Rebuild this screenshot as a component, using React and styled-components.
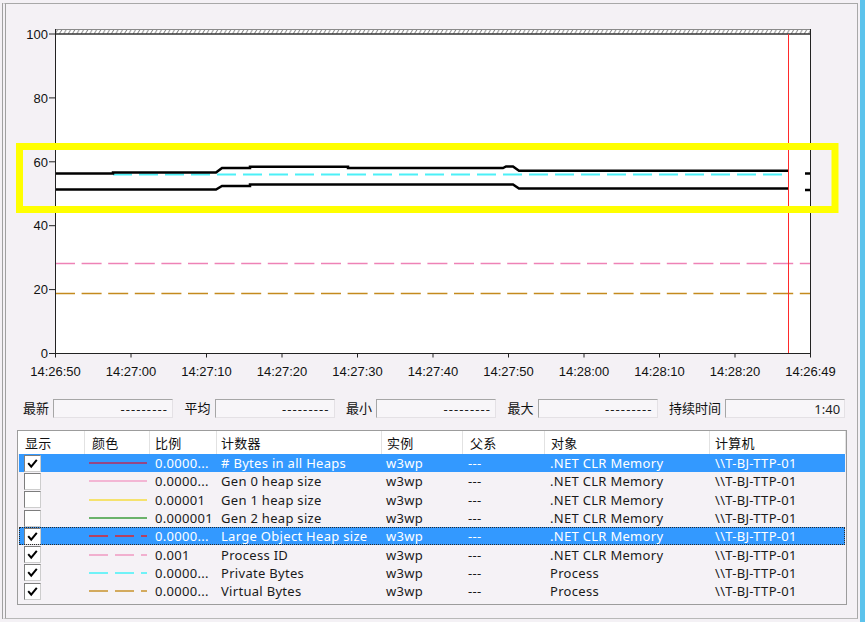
import styled, { createGlobalStyle } from "styled-components";

const GlobalStyle = createGlobalStyle`
  html, body {
    margin: 0;
    padding: 0;
  }
  body {
    background: #f4f1f5;
    font-family: "Noto Sans", "Noto Sans CJK SC", sans-serif;
  }
`;

const COLS = "67px 65px 67px 165px 81px 82px 165px 1fr";

const Screen = styled.div`
  width: 865px;
  height: 622px;
  display: flex;
  background: #f4f1f5;
  overflow: hidden;
`;

const Frame = styled.div`
  flex: 1;
  margin: 3px 2px 3px 2px;
  border-top: 1px solid #a8a8a8;
  border-right: 1px solid #a8a8a8;
  border-bottom: 1px solid #b8b8b8;
  border-left: 4px double #a0a0a0;
  display: flex;
  flex-direction: column;
`;

const SideStrip = styled.div`
  width: 5px;
  background: #5cc3ec;
`;

const ChartSvg = styled.svg`
  display: block;
  width: 851px;
  height: 380px;
  font-family: "Liberation Sans", Arial, sans-serif;
  font-size: 13px;
`;

const StatsRow = styled.div`
  display: flex;
  align-items: center;
  gap: 11.5px;
  height: 19px;
  margin-top: 15px;
  padding-left: 17px;
`;

const StatGroup = styled.div`
  display: flex;
  align-items: center;
  gap: 4px;
`;

const StatLabel = styled.span`
  font-size: 13px;
  line-height: 19px;
  color: #111;
  white-space: nowrap;
`;

const StatBox = styled.div`
  width: 120px;
  height: 19px;
  box-sizing: border-box;
  border: 1px solid;
  border-color: #a6a6a6 #e4e1e5 #e4e1e5 #a6a6a6;
  background: #f8f6f9;
  display: flex;
  align-items: center;
  justify-content: flex-end;
  padding-right: 4px;
  font-size: 13px;
  color: #1e1e1e;
  letter-spacing: ${(p) => (p.$dashes ? "1.1px" : "0")};
`;

const Table = styled.div`
  margin: 12px 10px 0 11px;
  height: 175px;
  box-sizing: border-box;
  border: 1px solid #9c9c9c;
  background: #f5f2f6;
  font-size: 13px;
  letter-spacing: 0.3px;
  color: #1a1a1a;
`;

const HeaderRow = styled.div`
  display: grid;
  grid-template-columns: ${COLS};
  height: 23px;
  background: #ffffff;
  color: #111;
`;

const HeaderCell = styled.div`
  display: flex;
  align-items: center;
  padding-left: ${(p) => p.$pad}px;
  border-right: 1px solid #e2e2e2;
  white-space: nowrap;
  overflow: hidden;
`;

const Row = styled.div`
  display: grid;
  grid-template-columns: ${COLS};
  height: 18.3px;
  margin: 0 1px;
  align-items: center;
  background: ${(p) => (p.$selected ? "#3399ff" : "transparent")};
  color: ${(p) => (p.$selected ? "#ffffff" : "#1a1a1a")};
  outline: ${(p) => (p.$focused ? "1px dotted #2a2a2a" : "none")};
  outline-offset: -1px;
`;

const Cell = styled.div`
  padding-left: ${(p) => p.$pad}px;
  white-space: nowrap;
  overflow: hidden;
  display: flex;
  align-items: center;
  line-height: 18px;
`;

const CheckBox = styled.span`
  display: inline-flex;
  width: 17px;
  height: 17px;
  box-sizing: border-box;
  border: 1px solid;
  border-color: #7d7d7d #cdcdcd #cdcdcd #7d7d7d;
  background: #ffffff;
  align-items: center;
  justify-content: center;
`;

const rows = [
  { checked: true, color: "#b82c5c", dashed: false, scale: "0.0000...", counter: "# Bytes in all Heaps", object: ".NET CLR Memory", selected: true },
  { checked: false, color: "#f2a2c8", dashed: false, scale: "0.0000...", counter: "Gen 0 heap size", object: ".NET CLR Memory" },
  { checked: false, color: "#f4dc40", dashed: false, scale: "0.00001", counter: "Gen 1 heap size", object: ".NET CLR Memory" },
  { checked: false, color: "#3c9c3c", dashed: false, scale: "0.000001", counter: "Gen 2 heap size", object: ".NET CLR Memory" },
  { checked: true, color: "#e0242e", dashed: true, scale: "0.0000...", counter: "Large Object Heap size", object: ".NET CLR Memory", selected: true, focused: true },
  { checked: true, color: "#f09ac2", dashed: true, scale: "0.001", counter: "Process ID", object: ".NET CLR Memory" },
  { checked: true, color: "#44f2f8", dashed: true, scale: "0.0000...", counter: "Private Bytes", object: "Process" },
  { checked: true, color: "#c8922c", dashed: true, scale: "0.0000...", counter: "Virtual Bytes", object: "Process" },
];

const headers = [
  { label: "显示", pad: 7 },
  { label: "颜色", pad: 7 },
  { label: "比例", pad: 5 },
  { label: "计数器", pad: 4 },
  { label: "实例", pad: 5 },
  { label: "父系", pad: 7 },
  { label: "对象", pad: 6 },
  { label: "计算机", pad: 5 },
];

const stats = [
  { label: "最新", value: "---------" },
  { label: "平均", value: "---------" },
  { label: "最小", value: "---------" },
  { label: "最大", value: "---------" },
  { label: "持续时间", value: "1:40" },
];

const xLabels = [
  "14:26:50", "14:27:00", "14:27:10", "14:27:20", "14:27:30", "14:27:40",
  "14:27:50", "14:28:00", "14:28:10", "14:28:20", "14:26:49",
];

const X0 = 55.5;
const X1 = 810.5;
const Y0 = 353.5;
const yOf = (v) => Y0 - (v * 319.5) / 100;

const Chart = () => (
  <ChartSvg viewBox="6 4 851 380">
    <defs>
      <pattern id="hatch" x="55" y="29" width="4.33" height="5" patternUnits="userSpaceOnUse">
        <path d="M0 5 L3 0" stroke="#7a7a7a" strokeWidth="0.9" />
      </pattern>
    </defs>
    <rect x={X0} y="29" width={X1 - X0} height={Y0 - 29} fill="#ffffff" />
    <rect x={X0} y="29" width={X1 - X0} height="5" fill="url(#hatch)" />
    <path d={`M${X0} 29.5 H${X1}`} stroke="#8a8a8a" strokeWidth="1" />
    <path d={`M${X0} 34 H${X1}`} stroke="#333" strokeWidth="1.4" />

    {[0, 20, 40, 60, 80, 100].map((v) => (
      <g key={v}>
        <path d={`M49 ${yOf(v)} H${X0}`} stroke="#222" strokeWidth="1" />
        <text x="48" y={yOf(v) + 4.7} textAnchor="end" fill="#111">{v}</text>
      </g>
    ))}

    {xLabels.map((t, k) => {
      const x = X0 + k * 75.5;
      return (
        <g key={k}>
          <path d={`M${x} ${Y0} V357.5`} stroke="#222" strokeWidth="1" />
          <text x={x} y="375.5" textAnchor="middle" fill="#111">{t}</text>
        </g>
      );
    })}

    <path d={`M55 263.5 H${X1}`} stroke="#ee82b6" strokeWidth="1.5" strokeDasharray="20 6.6" fill="none" />
    <path d={`M55 293.5 H${X1}`} stroke="#c48a1e" strokeWidth="1.5" strokeDasharray="20 6.6" fill="none" />
    <path d="M113 174.5 H788" stroke="#4cf0f7" strokeWidth="2" strokeDasharray="19 7" fill="none" />

    <path
      d="M55 173.5 H113 V172.5 H216 L222 168 H250 V166.7 H348 V168 H503 L506 166.5 H513 L519 170.7 H788"
      stroke="#000" strokeWidth="2.5" fill="none"
    />
    <path
      d="M55 189.5 H216 L222 186 H250 V184.5 H513 L519 188.5 H788"
      stroke="#000" strokeWidth="2.5" fill="none"
    />
    <path d="M805 173.5 H811 M805 190 H811" stroke="#000" strokeWidth="2.5" fill="none" />

    <path d="M788.5 34 V353" stroke="#ff2a2a" strokeWidth="1" />

    <path d={`M${X0} 29 V354`} stroke="#222" strokeWidth="1" />
    <path d={`M${X1} 29 V354`} stroke="#222" strokeWidth="1" />
    <path d={`M55 ${Y0} H811`} stroke="#222" strokeWidth="1" />

    <rect x="19.5" y="146.5" width="815.5" height="63" fill="none" stroke="#ffff00" strokeWidth="7" />
  </ChartSvg>
);

const Check = () => (
  <svg width="15" height="15" viewBox="0 0 15 15">
    <path d="M3.2 7.2 L6.2 10.6 L11.8 3.8" stroke="#000" strokeWidth="2" fill="none" />
  </svg>
);

const ColorSample = ({ color, dashed }) => (
  <svg width="58" height="4" viewBox="0 0 58 4">
    <path d="M0 2 H58" stroke={color} strokeWidth="1.5" strokeDasharray={dashed ? "19 7" : "none"} />
  </svg>
);

export default function App() {
  return (
    <Screen>
      <GlobalStyle />
      <Frame>
        <Chart />
        <StatsRow>
          {stats.map((s) => (
            <StatGroup key={s.label}>
              <StatLabel>{s.label}</StatLabel>
              <StatBox $dashes={s.value.startsWith("-")}>{s.value}</StatBox>
            </StatGroup>
          ))}
        </StatsRow>
        <Table>
          <HeaderRow>
            {headers.map((h) => (
              <HeaderCell key={h.label} $pad={h.pad}>{h.label}</HeaderCell>
            ))}
          </HeaderRow>
          {rows.map((r) => (
            <Row key={r.counter} $selected={r.selected} $focused={r.focused}>
              <Cell $pad={5}>
                <CheckBox>{r.checked && <Check />}</CheckBox>
              </Cell>
              <Cell $pad={3}>
                <ColorSample color={r.color} dashed={r.dashed} />
              </Cell>
              <Cell $pad={4}>{r.scale}</Cell>
              <Cell $pad={3}>{r.counter}</Cell>
              <Cell $pad={3}>w3wp</Cell>
              <Cell $pad={4}>---</Cell>
              <Cell $pad={4}>{r.object}</Cell>
              <Cell $pad={4}>{"\\\\T-BJ-TTP-01"}</Cell>
            </Row>
          ))}
        </Table>
      </Frame>
      <SideStrip />
    </Screen>
  );
}
